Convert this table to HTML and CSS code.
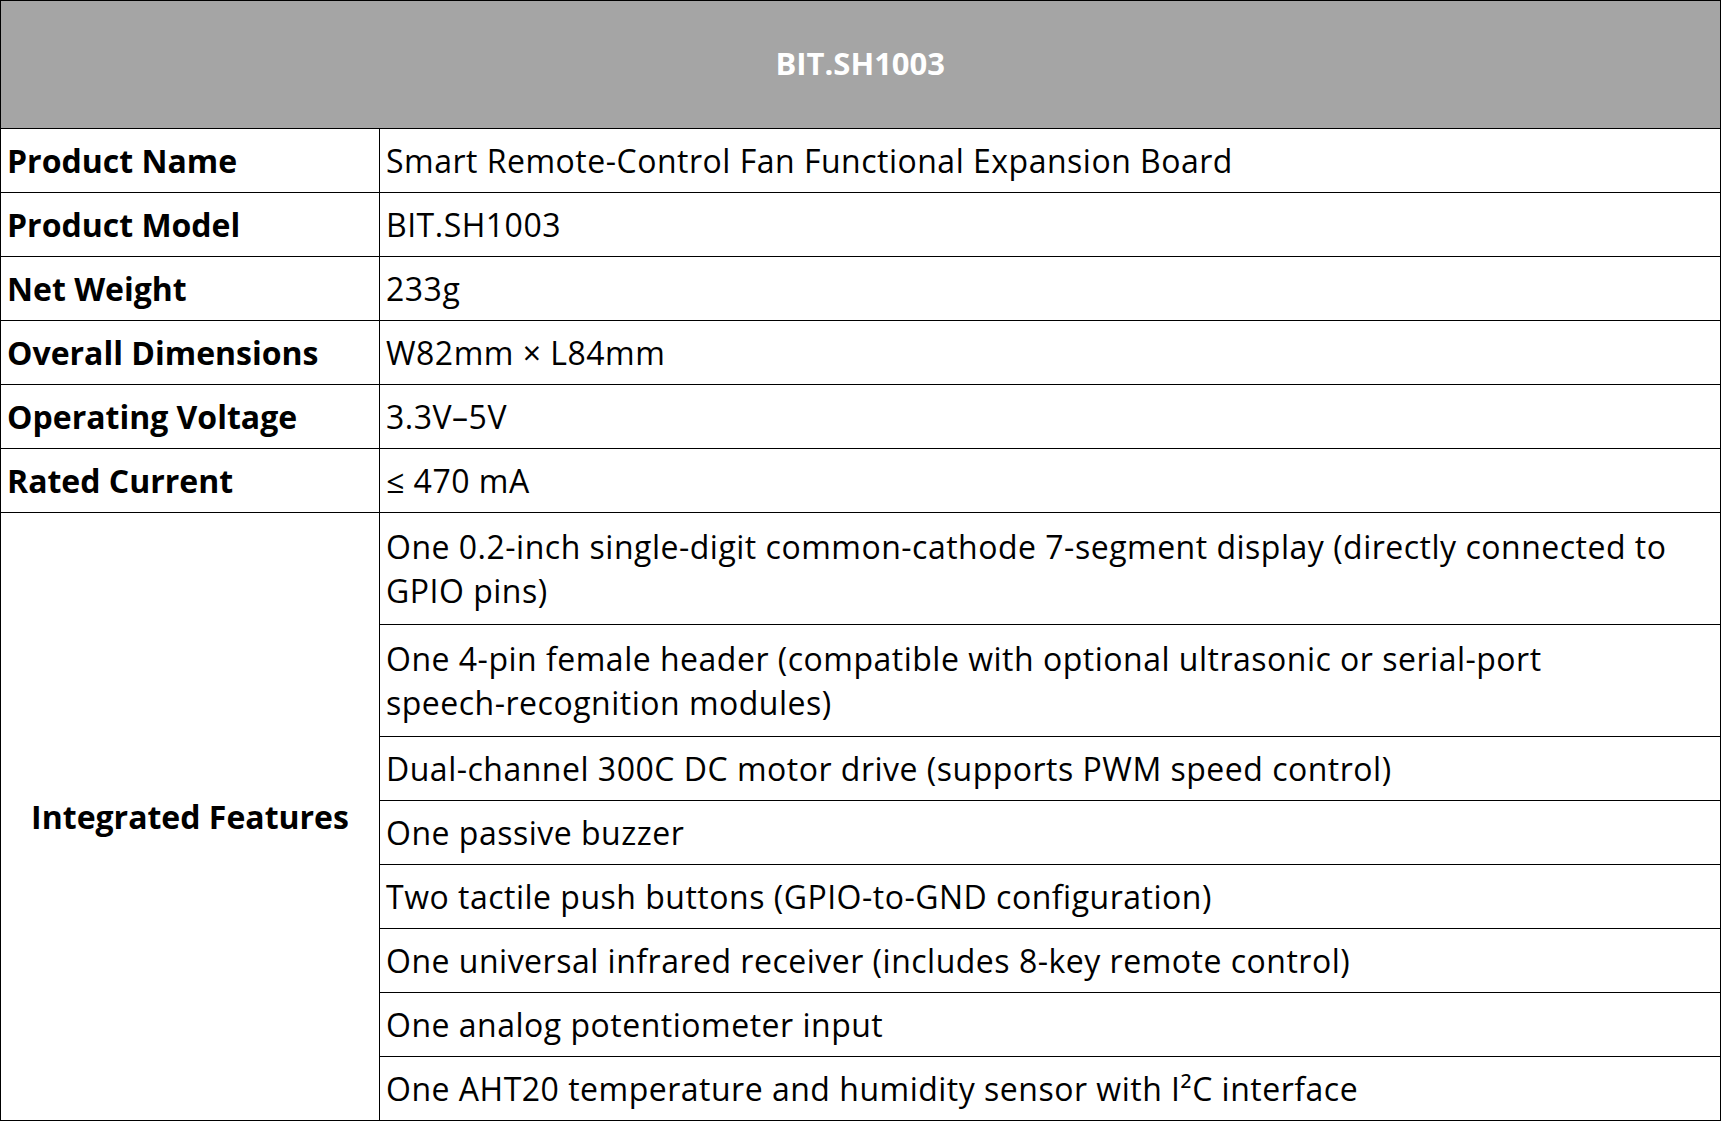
FILE: index.html
```html
<!DOCTYPE html>
<html lang="en">
<head>
<meta charset="utf-8">
<title>BIT.SH1003</title>
<link rel="stylesheet" href="styles.css">
</head>
<body>
<table class="spec">
  <colgroup>
    <col class="col-label">
    <col class="col-value">
  </colgroup>
  <thead>
    <tr class="head-row"><th colspan="2">BIT.SH1003</th></tr>
  </thead>
  <tbody>
    <tr><td class="label">Product Name</td><td class="value">Smart Remote-Control Fan Functional Expansion Board</td></tr>
    <tr><td class="label">Product Model</td><td class="value">BIT.SH1003</td></tr>
    <tr><td class="label">Net Weight</td><td class="value">233g</td></tr>
    <tr><td class="label">Overall Dimensions</td><td class="value">W82mm × L84mm</td></tr>
    <tr><td class="label">Operating Voltage</td><td class="value">3.3V–5V</td></tr>
    <tr><td class="label">Rated Current</td><td class="value">≤ 470 mA</td></tr>
    <tr class="tall"><td class="label center" rowspan="8">Integrated Features</td><td class="value">One 0.2-inch single-digit common-cathode 7-segment display (directly connected to GPIO pins)</td></tr>
    <tr class="tall"><td class="value">One 4-pin female header (compatible with optional ultrasonic or serial-port <span class="nb">speech-recognition</span> modules)</td></tr>
    <tr><td class="value">Dual-channel 300C DC motor drive (supports PWM speed control)</td></tr>
    <tr><td class="value">One passive buzzer</td></tr>
    <tr><td class="value">Two tactile push buttons (GPIO-to-GND configuration)</td></tr>
    <tr><td class="value">One universal infrared receiver (includes 8-key remote control)</td></tr>
    <tr><td class="value">One analog potentiometer input</td></tr>
    <tr><td class="value">One AHT20 temperature and humidity sensor with I²C interface</td></tr>
  </tbody>
</table>
</body>
</html>
```

FILE: styles.css
```css
html, body {
  margin: 0;
  padding: 0;
  background: #ffffff;
}

.spec {
  width: 1720px;
  border-collapse: collapse;
  table-layout: fixed;
  font-family: "Open Sans", "Noto Sans", "Liberation Sans", sans-serif;
  font-size: 32px;
  line-height: 44px;
  color: #000000;
}

.col-label { width: 379px; }
.col-value { width: 1341px; }

.spec th,
.spec td {
  border: 1px solid #000000;
  padding: 0 6px;
  text-align: left;
  vertical-align: middle;
}

.head-row th {
  height: 124px;
  padding-bottom: 3px;
  background: #a5a5a5;
  color: #ffffff;
  font-weight: 700;
  font-size: 31px;
  line-height: 40px;
  text-align: center;
  border-right-width: 2px;
}

.spec tbody tr { height: 64px; }
.spec tbody tr.tall { height: 112px; }

.label {
  font-weight: 700;
}

.label.center {
  text-align: center;
}

.value {
  letter-spacing: 0.5px;
  border-right-width: 2px !important;
}

.nb {
  white-space: nowrap;
}
```
